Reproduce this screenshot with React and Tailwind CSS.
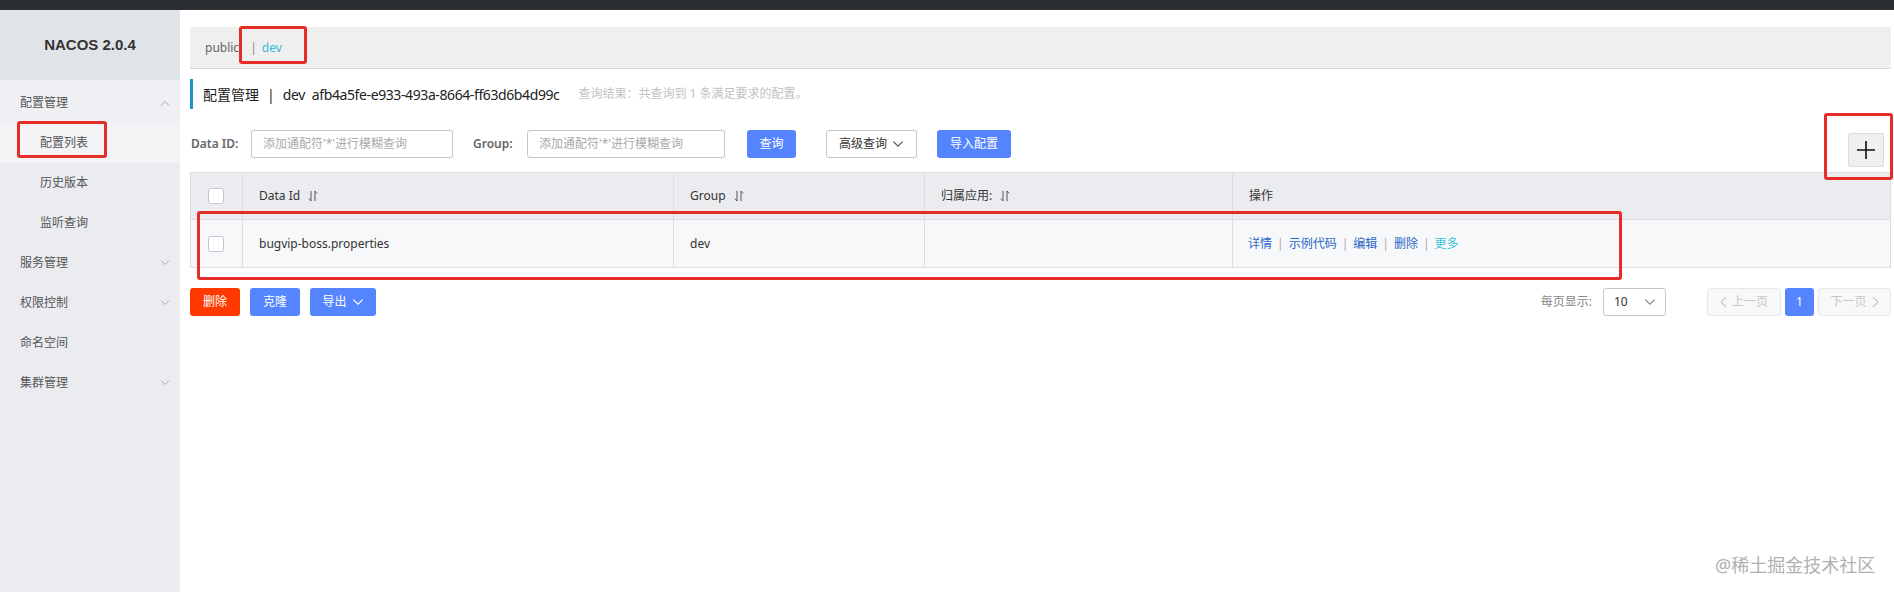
import React from 'react';

const Chevron = ({ up = false, className = '' }) => (
  <svg className={className} width="10" height="6" viewBox="0 0 10 6" fill="none" stroke="currentColor" strokeWidth="1">
    {up ? <path d="M1 5.5L5 1.5l4 4" /> : <path d="M1 0.5l4 4 4-4" />}
  </svg>
);

const SortIcon = () => (
  <svg className="ml-[8px] inline-block" width="10" height="12" viewBox="0 0 10 12" fill="none" stroke="#555" strokeWidth="1">
    <path d="M3 1v10M0.8 8.6L3 11" />
    <path d="M7 11V1M7 1l2.2 2.4" />
  </svg>
);

const CheckBox = () => (
  <span className="block w-[16px] h-[16px] bg-white border border-[#c4c6cf] rounded-[3px]" />
);

const menu = [
  { label: '配置管理', chevron: 'up', children: ['配置列表', '历史版本', '监听查询'] },
  { label: '服务管理', chevron: 'down' },
  { label: '权限控制', chevron: 'down' },
  { label: '命名空间' },
  { label: '集群管理', chevron: 'down' },
];

const Sidebar = () => (
  <div className="w-[180px] shrink-0 bg-[#eaecf0] text-[12px] text-[#555]">
    <div className="h-[70px] bg-[#e0e3e8] flex items-center justify-center font-['Liberation_Sans',sans-serif] font-bold text-[15px] text-[#333]">
      NACOS 2.0.4
    </div>
    {menu.map((m) => (
      <div key={m.label}>
        <div className={`flex items-center pl-[20px] pr-[10px] ${m.children ? 'h-[43px] pt-[3px] bg-[#eef0f3]' : 'h-[40px]'}`}>
          <span className="flex-1">{m.label}</span>
          {m.chevron && <Chevron up={m.chevron === 'up'} className="text-[#aaa]" />}
        </div>
        {m.children &&
          m.children.map((c, i) => (
            <div key={c} className={`h-[40px] flex items-center pl-[40px] ${i === 0 ? 'bg-[#f2f3f5]' : ''}`}>
              {c}
            </div>
          ))}
      </div>
    ))}
  </div>
);

const cols = [
  { key: 'cb', w: 'w-[51px]' },
  { key: 'Data Id', w: 'w-[431px]', sort: true },
  { key: 'Group', w: 'w-[251px]', sort: true },
  { key: '归属应用:', w: 'w-[308px]', sort: true },
  { key: '操作', w: 'flex-1' },
];

const links = ['详情', '示例代码', '编辑', '删除', '更多'];

const Table = () => (
  <div className="mt-[5px] border border-[#dcdee3] text-[12px] text-[#333]">
    <div className="flex h-[47px] bg-[#ebecf0] border-b border-[#dcdee3]">
      {cols.map((c, i) => (
        <div key={c.key} className={`${c.w} flex items-center ${i > 0 ? 'border-l border-[#dcdee3] pl-[16px]' : 'pl-[17px]'}`}>
          {c.key === 'cb' ? <CheckBox /> : <span>{c.key}</span>}
          {c.sort && <SortIcon />}
        </div>
      ))}
    </div>
    <div className="flex h-[47px] bg-[#f7f8fa]">
      <div className="w-[51px] flex items-center pl-[17px]"><CheckBox /></div>
      <div className="w-[431px] flex items-center border-l border-[#dcdee3] pl-[16px]">bugvip-boss.properties</div>
      <div className="w-[251px] flex items-center border-l border-[#dcdee3] pl-[16px]">dev</div>
      <div className="w-[308px] border-l border-[#dcdee3]" />
      <div className="flex-1 flex items-center border-l border-[#dcdee3] pl-[15px]">
        {links.map((l, i) => (
          <React.Fragment key={l}>
            {i > 0 && <span className="mx-[5px] text-[#aaa]">|</span>}
            <span className={i === links.length - 1 ? 'text-[#39c3dc]' : 'text-[#2b65c8]'}>{l}</span>
          </React.Fragment>
        ))}
      </div>
    </div>
  </div>
);

const Main = () => (
  <div className="flex-1 bg-white pl-[10px] pr-[3px] pt-[17px] text-[12px]">
    {/* namespace tabs */}
    <div className="h-[42px] bg-[#efefef] border-b border-[#d6d6d6] flex items-center pl-[15px] text-[12px]">
      <span className="text-[#666]">public</span>
      <span className="ml-[11px] text-[#888]">|</span>
      <span className="ml-[5px] text-[#33bcd8]">dev</span>
    </div>

    {/* title */}
    <div className="mt-[10px] h-[30px] border-l-[3px] border-[#1a95c8] pl-[10px] flex items-center">
      <span className="text-[14px] text-[#222]">配置管理</span>
      <span className="text-[14px] text-[#222] mx-[8px]">|</span>
      <span className="text-[14px] text-[#222] tracking-[-0.4px]">dev</span>
      <span className="ml-[7px] text-[14px] text-[#222] tracking-[-0.4px]">afb4a5fe-e933-493a-8664-ff63d6b4d99c</span>
      <span className="ml-[19px] text-[12px] text-[#c2c2c2]">查询结果：共查询到 1 条满足要求的配置。</span>
    </div>

    {/* search row */}
    <div className="mt-[21px] flex items-start">
      <span className="h-[28px] flex items-center pl-[1px] font-semibold text-[#666] w-[61px]">Data ID:</span>
      <div className="w-[202px] h-[28px] border border-[#c4c6cf] rounded-[3px] flex items-center pl-[11px] text-[#aaa]">
        添加通配符'*'进行模糊查询
      </div>
      <span className="ml-[20px] h-[28px] flex items-center font-semibold text-[#666] w-[54px]">Group:</span>
      <div className="w-[198px] h-[28px] border border-[#c4c6cf] rounded-[3px] flex items-center pl-[11px] text-[#aaa]">
        添加通配符'*'进行模糊查询
      </div>
      <button className="ml-[22px] w-[49px] h-[28px] rounded-[3px] bg-[#5584ff] text-white">查询</button>
      <button className="ml-[30px] w-[91px] h-[28px] rounded-[3px] border border-[#c4c6cf] bg-white text-[#333] flex items-center justify-center gap-[5px]">
        高级查询 <Chevron className="text-[#555] w-[12px] h-[7px]" />
      </button>
      <button className="ml-[20px] w-[74px] h-[28px] rounded-[3px] bg-[#5584ff] text-white">导入配置</button>
      <button className="ml-auto mr-[7px] mt-[3px] w-[36px] h-[34px] bg-[#f0f0f0] border border-[#dcdcdc] rounded-[2px] flex items-center justify-center">
        <svg width="20" height="20" viewBox="0 0 20 20" stroke="#111" strokeWidth="1.6">
          <path d="M10 1v18M1 10h18" />
        </svg>
      </button>
    </div>

    <Table />

    {/* bottom actions */}
    <div className="mt-[20px] flex items-center">
      <button className="w-[50px] h-[28px] rounded-[3px] bg-[#ff3a00] text-white">删除</button>
      <button className="ml-[10px] w-[50px] h-[28px] rounded-[3px] bg-[#5584ff] text-white">克隆</button>
      <button className="ml-[10px] w-[66px] h-[28px] rounded-[3px] bg-[#5584ff] text-white flex items-center justify-center gap-[5px]">
        导出 <Chevron className="w-[12px] h-[7px]" />
      </button>
      <div className="ml-auto flex items-center">
        <span className="text-[#888]">每页显示:</span>
        <div className="ml-[11px] w-[63px] h-[28px] border border-[#c4c6cf] rounded-[3px] flex items-center pl-[10px] pr-[9px] text-[#333]">
          <span className="flex-1">10</span>
          <Chevron className="text-[#888] w-[12px] h-[7px]" />
        </div>
        <button className="ml-[41px] w-[74px] h-[28px] rounded-[3px] border border-[#e6e7eb] bg-[#f7f8fa] text-[#c8c8c8] flex items-center justify-center gap-[5px]">
          <svg width="7" height="12" viewBox="0 0 7 12" fill="none" stroke="currentColor" strokeWidth="1.2"><path d="M6 1L1 6l5 5" /></svg>
          上一页
        </button>
        <button className="ml-[4px] w-[29px] h-[28px] rounded-[3px] bg-[#5584ff] text-white">1</button>
        <button className="ml-[4px] w-[73px] h-[28px] rounded-[3px] border border-[#e6e7eb] bg-[#f7f8fa] text-[#c8c8c8] flex items-center justify-center gap-[5px]">
          下一页
          <svg width="7" height="12" viewBox="0 0 7 12" fill="none" stroke="currentColor" strokeWidth="1.2"><path d="M1 1l5 5-5 5" /></svg>
        </button>
      </div>
    </div>
  </div>
);

export default function App() {
  return (
    <div className="relative w-[1894px] h-[592px] overflow-hidden font-['Noto_Sans','Noto_Sans_CJK_SC',sans-serif] bg-white">
      <div className="h-[10px] bg-[#2b2e33]" />
      <div className="flex h-[582px]">
        <Sidebar />
        <Main />
      </div>

      {/* red annotation boxes */}
      <div className="absolute left-[17px] top-[121px] w-[90px] h-[37px] border-[3px] border-[#e52d27] rounded-[3px]" />
      <div className="absolute left-[239px] top-[26px] w-[68px] h-[38px] border-[3px] border-[#e52d27] rounded-[3px]" />
      <div className="absolute left-[1824px] top-[113px] w-[69px] h-[67px] border-[3px] border-[#e52d27] rounded-[3px]" />
      <div className="absolute left-[197px] top-[211px] w-[1425px] h-[69px] border-[3px] border-[#e52d27] rounded-[3px]" />

      <div className="absolute left-[1715px] top-[552px] text-[18px] text-[#b0b0b0]">@稀土掘金技术社区</div>
    </div>
  );
}
